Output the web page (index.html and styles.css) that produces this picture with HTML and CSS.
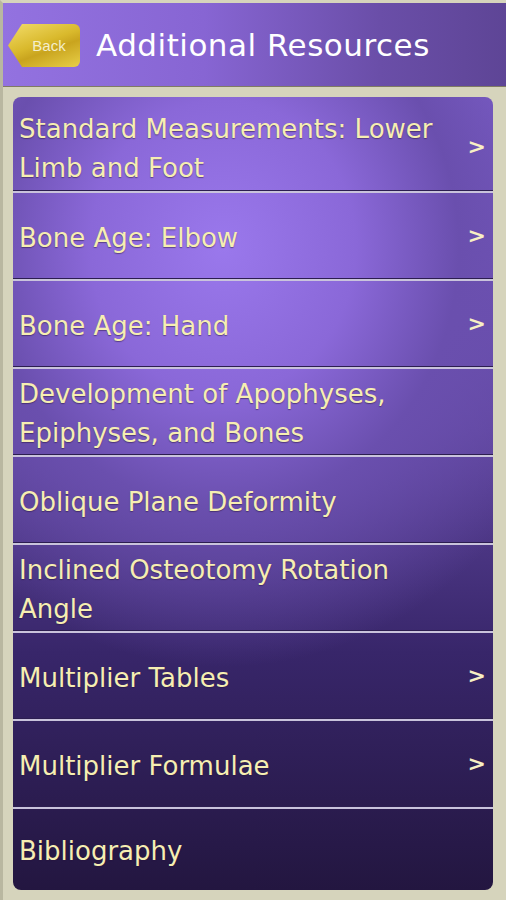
FILE: index.html
```html
<!DOCTYPE html>
<html lang="en">
<head>
  <meta charset="UTF-8">
  <meta name="viewport" content="width=device-width, initial-scale=1.0">
  <title>Additional Resources</title>
  <link rel="stylesheet" href="styles.css">
</head>
<body>
  <div class="screen">
    <div class="header">
      <div class="back">Back</div>
      <div class="title">Additional Resources</div>
    </div>
    <div class="frame">
      <div class="list">
        <div class="row first">
          <div class="label">Standard Measurements: Lower Limb and Foot</div>
          <div class="chev">&gt;</div>
        </div>
        <div class="row">
          <div class="label">Bone Age: Elbow</div>
          <div class="chev">&gt;</div>
        </div>
        <div class="row">
          <div class="label">Bone Age: Hand</div>
          <div class="chev">&gt;</div>
        </div>
        <div class="row">
          <div class="label">Development of Apophyses, Epiphyses, and Bones</div>
        </div>
        <div class="row">
          <div class="label">Oblique Plane Deformity</div>
        </div>
        <div class="row">
          <div class="label">Inclined Osteotomy Rotation Angle</div>
        </div>
        <div class="row">
          <div class="label">Multiplier Tables</div>
          <div class="chev">&gt;</div>
        </div>
        <div class="row">
          <div class="label">Multiplier Formulae</div>
          <div class="chev">&gt;</div>
        </div>
        <div class="row last">
          <div class="label">Bibliography</div>
        </div>
      </div>
    </div>
  </div>
</body>
</html>
```

FILE: styles.css
```css
html, body {
  margin: 0;
  padding: 0;
  height: 100%;
}
body {
  background-color: #d6d4bc;
  font-family: "DejaVu Sans", "Noto Sans", sans-serif;
}
.screen {
  height: 900px;
  display: flex;
  flex-direction: column;
  border-left: 3px solid #b9b7a0;
  box-sizing: border-box;
  border-top: 3px solid #d6d4bc;
}
.header {
  height: 83px;
  display: flex;
  align-items: center;
  background: linear-gradient(90deg, #9372e0 0%, #8765d3 40%, #6a4ea8 75%, #5e4596 100%);
  border-bottom: 1px solid #7f7a64;
}
.back {
  width: 62px;
  height: 43px;
  margin-left: 5px;
  margin-top: 2px;
  padding-left: 10px;
  display: flex;
  align-items: center;
  justify-content: center;
  background: linear-gradient(160deg, #f2dc6a 0%, #d9b92c 45%, #c9a41e 60%, #e8cf48 100%);
  clip-path: polygon(14px 0, 100% 0, 100% 100%, 14px 100%, 0 50%);
  border-radius: 0 6px 6px 0;
  color: #f4eecc;
  font-family: "Liberation Sans", sans-serif;
  font-size: 15px;
}
.title {
  margin-left: 16px;
  color: #ffffff;
  font-size: 31px;
  letter-spacing: 0.5px;
}
.frame {
  flex: 1;
  padding: 10px 13px 10px 10px;
}
.list {
  height: 100%;
  border-radius: 8px;
  overflow: hidden;
  display: flex;
  flex-direction: column;
  background:
    radial-gradient(ellipse 380px 420px at 210px 150px, #9a78ec 0%, #8a68d8 35%, #6a4fae 62%, rgba(60, 40, 110, 0) 100%),
    linear-gradient(180deg, #8062d0 0%, #5f469e 42%, #38266a 70%, #231640 100%);
}
.row {
  height: 82px;
  flex-shrink: 0;
  display: flex;
  align-items: center;
  justify-content: space-between;
  padding: 4px 7px 0 6px;
  border-bottom: 2px solid #c9c3dc;
  box-shadow: inset 0 -1px 0 #2c1e50;
}
.row.first {
  height: 84px;
  padding-top: 10px;
}
.row.last {
  flex: 1;
  border-bottom: none;
  box-shadow: none;
}
.label {
  color: #f6eeb2;
  font-size: 26px;
  line-height: 39px;
  max-width: 440px;
  text-shadow: 0 1px 1px rgba(40, 20, 60, 0.5);
}
.chev {
  color: #f8f0c4;
  font-size: 22px;
  font-weight: bold;
  margin-top: -6px;
}
```
